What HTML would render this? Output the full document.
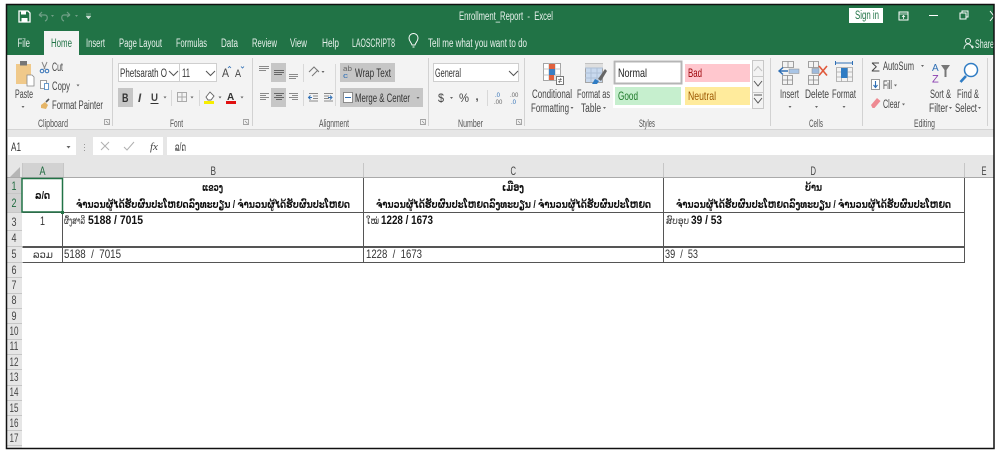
<!DOCTYPE html>
<html lang="lo"><head><meta charset="utf-8"><title>Enrollment_Report - Excel</title>
<style>
html,body{margin:0;padding:0;background:#fff;width:999px;height:457px;overflow:hidden}
svg{display:block;filter:blur(.35px)}
text{font-family:"Liberation Sans","DejaVu Sans",sans-serif;white-space:pre}
.w{fill:#e8f1ec;font-size:11.5px}
.t{fill:#444;font-size:11.5px}
.l{fill:#555;font-size:11px}
.c{fill:#333;font-size:11.5px}
.h{fill:#111;font-size:11px;font-weight:bold}
.n{fill:#111;font-size:12px;font-weight:bold}
.ln{fill:none;stroke:#777;stroke-width:1}
.cell{stroke:#555;stroke-width:1;fill:none}
.rh{fill:#444;font-size:12px}
.car{fill:#666}
</style></head><body>
<svg width="999" height="457" viewBox="0 0 999 457" xmlns="http://www.w3.org/2000/svg">
<rect width="999" height="457" fill="#fff"/>
<!-- title + tabs -->
<rect x="6" y="4" width="988" height="51" fill="#217346"/>
<rect x="44" y="31" width="35" height="24" fill="#f3f3f3"/>
<!-- save -->
<path d="M19 11h9l2 2v9H19z" fill="none" stroke="#fff" stroke-width="1.3"/><rect x="21" y="11" width="5" height="3.5" fill="#fff"/><rect x="21.500" y="18" width="6" height="4" fill="#fff"/>
<path d="M39 15l3-3M39 15l3 2M39 15h6c3 0 3 5 0 6" fill="none" stroke="#6f9f86" stroke-width="1.2"/>
<path d="M70 15l-3-3M70 15l-3 2M70 15h-6c-3 0-3 5 0 6" fill="none" stroke="#6f9f86" stroke-width="1.2"/>
<path d="M51 15h3l-1.500 2zM75 15h3l-1.500 2z" fill="#6f9f86"/>
<path d="M86 14h5M86 16h5l-2.500 3z" fill="#cfe0d6" stroke="#cfe0d6" stroke-width=".5"/>
<text class="w" x="459" y="20" textLength="94" lengthAdjust="spacingAndGlyphs">Enrollment_Report  -  Excel</text>
<rect x="849" y="8" width="34" height="15" fill="#fff"/>
<text x="855" y="19" textLength="24" lengthAdjust="spacingAndGlyphs" style="font-size:11.5px;fill:#217346">Sign in</text>
<rect x="899" y="12" width="9" height="8" fill="none" stroke="#fff"/><path d="M899 14h9M903.500 19v-3M902 17l1.500-1.500L905 17" stroke="#fff" fill="none" stroke-width=".8"/>
<path d="M929 15.500h9" stroke="#fff"/>
<rect x="960" y="13" width="6" height="6" fill="none" stroke="#fff"/><path d="M962 13v-2h6v6h-2" fill="none" stroke="#fff"/>
<path d="M990 11l4 5M990 21l4-5" stroke="#fff"/>
<text class="w" x="17.500" y="47" textLength="12.500" lengthAdjust="spacingAndGlyphs">File</text>
<text x="51" y="47" textLength="21" lengthAdjust="spacingAndGlyphs" style="font-size:11.5px;fill:#217346">Home</text>
<text class="w" x="86" y="47" textLength="19" lengthAdjust="spacingAndGlyphs">Insert</text>
<text class="w" x="119" y="47" textLength="43" lengthAdjust="spacingAndGlyphs">Page Layout</text>
<text class="w" x="176" y="47" textLength="31" lengthAdjust="spacingAndGlyphs">Formulas</text>
<text class="w" x="221" y="47" textLength="17" lengthAdjust="spacingAndGlyphs">Data</text>
<text class="w" x="252" y="47" textLength="25" lengthAdjust="spacingAndGlyphs">Review</text>
<text class="w" x="290" y="47" textLength="17" lengthAdjust="spacingAndGlyphs">View</text>
<text class="w" x="322" y="47" textLength="17" lengthAdjust="spacingAndGlyphs">Help</text>
<text class="w" x="352" y="47" textLength="43" lengthAdjust="spacingAndGlyphs">LAOSCRIPT8</text>
<path d="M412 45c-1-3-3-4-3-7a4.500 4.500 0 0 1 9 0c0 3-2 4-3 7zM412.500 47h2" fill="none" stroke="#fff"/>
<text class="w" x="428" y="47" textLength="99" lengthAdjust="spacingAndGlyphs">Tell me what you want to do</text>
<circle cx="968" cy="41" r="2.500" fill="none" stroke="#e8f1ec"/><path d="M964 49c0-3 2-5 4-5s3 1 4 3M971 47h3M972.500 45.500v3" fill="none" stroke="#e8f1ec" stroke-width=".9"/>
<text class="w" x="975" y="48" textLength="19" lengthAdjust="spacingAndGlyphs">Share</text>

<!-- ribbon -->
<rect x="7" y="55" width="987" height="74" fill="#f3f3f3"/>
<rect x="7" y="129" width="987" height="8" fill="#e6e6e6"/>
<path d="M7 129.500h987" stroke="#d4d4d4"/>
<!-- group dividers -->
<path d="M112.500 58v68M252.500 58v68M428.500 58v68M524.500 58v68M770.500 58v68M862.500 58v68M987.500 58v68" stroke="#d2d2d2"/>
<!-- clipboard -->
<rect x="16" y="64" width="15" height="20" fill="#f0c98a"/><rect x="20" y="61" width="7" height="4.500" fill="#777"/><path d="M27 75h5l2 2v9h-7z" fill="#fff" stroke="#888" stroke-width=".8"/>
<text class="t" x="15" y="98" textLength="18" lengthAdjust="spacingAndGlyphs">Paste</text>
<path class="car" d="M21.500 106h3l-1.500 2z"/>
<path d="M42 62l3 7M47 62l-3 7" stroke="#888" fill="none"/><circle cx="42" cy="71" r="1.800" fill="none" stroke="#2f6fb5"/><circle cx="47" cy="71" r="1.800" fill="none" stroke="#2f6fb5"/>
<text class="t" x="52" y="71" textLength="11" lengthAdjust="spacingAndGlyphs">Cut</text>
<rect x="40.500" y="80.500" width="6" height="8" fill="#fff" stroke="#888" stroke-width=".8"/><path d="M44.500 83.500h4v6h-4z" fill="#fff" stroke="#3f7fbf" stroke-width=".8"/>
<text class="t" x="52" y="90" textLength="18" lengthAdjust="spacingAndGlyphs">Copy</text>
<path class="car" d="M76.500 84.500h3l-1.500 2z"/>
<path d="M41 105l4-3 3 3-2 4-5-1z" fill="#e5b567"/><path d="M46 102l3-3" stroke="#555" stroke-width="1.600"/>
<text class="t" x="52" y="109" textLength="51" lengthAdjust="spacingAndGlyphs">Format Painter</text>
<text class="l" x="38" y="127" textLength="30" lengthAdjust="spacingAndGlyphs">Clipboard</text>
<path d="M104.500 119.500h5v5h-5zM106 121l2.500 2.500" fill="none" stroke="#888" stroke-width=".7"/>
<!-- font -->
<rect x="118.500" y="63.500" width="98" height="18" fill="#fff" stroke="#cfcfcf"/><path d="M179.500 63v19" stroke="#cfcfcf"/>
<text class="c" x="120" y="77" textLength="47" lengthAdjust="spacingAndGlyphs">Phetsarath O</text>
<path d="M169 71l4.500 4.500L178 71M206 71l4.500 4.500L215 71" fill="none" stroke="#555"/>
<text class="c" x="182" y="77" textLength="8" lengthAdjust="spacingAndGlyphs">11</text>
<text x="222" y="77" textLength="7" lengthAdjust="spacingAndGlyphs" style="font-size:12px;fill:#444">A</text><path d="M228 68l1.500-1.500L231 68" stroke="#2f6fb5" fill="none" stroke-width=".8"/>
<text x="235" y="77" textLength="6" lengthAdjust="spacingAndGlyphs" style="font-size:11px;fill:#444">A</text><path d="M241 66.500l1.500 1.500 1.500-1.500" stroke="#2f6fb5" fill="none" stroke-width=".8"/>
<rect x="118" y="88" width="15" height="19" fill="#c6c6c6"/>
<text x="122" y="102" textLength="6.500" lengthAdjust="spacingAndGlyphs" style="font-size:11.5px;font-weight:bold;fill:#333">B</text>
<text x="138" y="102" style="font-size:11.5px;font-weight:bold;font-style:italic;fill:#444">I</text>
<text x="151" y="101" textLength="7" lengthAdjust="spacingAndGlyphs" style="font-size:11px;font-weight:bold;fill:#444">U</text><path d="M150.500 103.500h8" stroke="#333"/>
<path class="car" d="M163.500 96.500h3l-1.500 2z"/>
<path d="M171.500 90v16M199.500 90v16" stroke="#d8d8d8"/>
<path d="M177.500 92.500h9v9h-9zM182 92.500v9M177.500 97h9" fill="none" stroke="#aaa"/>
<path class="car" d="M190.500 96.500h3l-1.500 2z"/>
<path d="M206 97l4-5 4 4-3 4h-3z" fill="#fff" stroke="#666" stroke-width=".9"/><rect x="204" y="101" width="10" height="3" fill="#f7ee00"/>
<path class="car" d="M218.500 96.500h3l-1.500 2z"/>
<text x="227" y="100" style="font-size:10px;font-weight:bold;fill:#333">A</text><rect x="226" y="101" width="10" height="3" fill="#e01010"/>
<path class="car" d="M240.500 96.500h3l-1.500 2z"/>
<text class="l" x="170" y="127" textLength="13" lengthAdjust="spacingAndGlyphs">Font</text>
<path d="M243.500 119.500h5v5h-5zM245 121l2.500 2.500" fill="none" stroke="#888" stroke-width=".7"/>
<!-- alignment -->
<rect x="271" y="63" width="15" height="19" fill="#c6c6c6"/><rect x="271" y="88" width="15" height="19" fill="#c6c6c6"/>
<g stroke="#8a8a8a" fill="none">
<path d="M259 66.500h10M259 68.500h10M259 70.500h7"/>
<path d="M274 70.500h10M274 72.500h10M274 74.500h8" stroke="#666"/>
<path d="M289 74.500h9M289 76.500h9M289 78.500h7"/>
<path d="M260 93.500h9M260 95.500h6M260 97.500h9M260 99.500h6"/>
<path d="M274 93.500h10M276 95.500h6M274 97.500h10M276 99.500h6" stroke="#666"/>
<path d="M289 93.500h9M292 95.500h6M289 97.500h9M292 99.500h6"/>
</g>
<path d="M303.500 64v18M303.500 90v16M335.500 64v42" stroke="#d8d8d8"/>
<path d="M309 72l5-5 5 5M312 76l6-6" fill="none" stroke="#777"/><path class="car" d="M321.500 71h3l-1.500 2z"/>
<path d="M309 93.500h9M313 96h5M313 98.500h5M309 101h9" stroke="#888"/><path d="M312 97.500l-3 0M310.500 95.500l-2 2 2 2" stroke="#2f6fb5" fill="none"/>
<path d="M324 93.500h9M324 96h5M324 98.500h5M324 101h9" stroke="#888"/><path d="M328 97.500h3M330 95.500l2 2-2 2" stroke="#2f6fb5" fill="none"/>
<rect x="340" y="63" width="55" height="19" fill="#c6c6c6"/><rect x="340" y="88" width="83" height="19" fill="#c6c6c6"/>
<text x="343" y="71" textLength="9" lengthAdjust="spacingAndGlyphs" style="font-size:7px;fill:#666">ab</text><text x="343" y="78" textLength="5" lengthAdjust="spacingAndGlyphs" style="font-size:7px;fill:#2f6fb5">c</text>
<text class="c" x="355" y="77" textLength="36" lengthAdjust="spacingAndGlyphs">Wrap Text</text>
<rect x="343.500" y="92.500" width="9" height="10" fill="#fff" stroke="#777" stroke-width=".8"/><path d="M345 97.500h6" stroke="#2f6fb5"/>
<text class="c" x="355" y="102" textLength="55" lengthAdjust="spacingAndGlyphs">Merge &amp; Center</text>
<path class="car" d="M416.500 97h3l-1.500 2z"/>
<text class="l" x="319" y="127" textLength="30" lengthAdjust="spacingAndGlyphs">Alignment</text>
<path d="M420.500 119.500h5v5h-5zM422 121l2.500 2.500" fill="none" stroke="#888" stroke-width=".7"/>
<!-- number -->
<rect x="433.500" y="63.500" width="85" height="18" fill="#fff" stroke="#cfcfcf"/>
<text class="c" x="435" y="77" textLength="26" lengthAdjust="spacingAndGlyphs">General</text>
<path d="M509 71l4.500 4.500L518 71" fill="none" stroke="#555"/>
<text x="438" y="102" textLength="6" lengthAdjust="spacingAndGlyphs" style="font-size:12px;fill:#444">$</text><path class="car" d="M450 97h3l-1.500 2z"/>
<text x="459" y="102" textLength="10" lengthAdjust="spacingAndGlyphs" style="font-size:12px;fill:#444">%</text>
<text x="475.500" y="100" style="font-size:11px;font-weight:bold;fill:#444">,</text>
<path d="M487.500 90v16" stroke="#d8d8d8"/>
<text x="495" y="97" style="font-size:6px;fill:#2f6fb5">.0</text><text x="494" y="104" style="font-size:6px;fill:#666">.00</text>
<text x="510" y="97" style="font-size:6px;fill:#666">.00</text><text x="511" y="104" style="font-size:6px;fill:#2f6fb5">.0</text>
<text class="l" x="458" y="127" textLength="25" lengthAdjust="spacingAndGlyphs">Number</text>
<path d="M516.500 119.500h5v5h-5zM518 121l2.500 2.500" fill="none" stroke="#888" stroke-width=".7"/>
<!-- styles -->
<g>
<rect x="543.500" y="63.500" width="17" height="17" fill="#fff" stroke="#a5a5a5"/>
<path d="M543.500 69h17M543.500 75h17M549 63.500v17M555 63.500v17" stroke="#c5c5c5" fill="none"/>
<rect x="549" y="64" width="6" height="5" fill="#e0623f"/><rect x="549" y="69" width="6" height="6" fill="#3a7fc4"/><rect x="549" y="75" width="5" height="5" fill="#e0623f"/>
<rect x="556.500" y="76.500" width="7" height="8" fill="#fff" stroke="#777"/><path d="M558 79.500h4M558 81.500h4M561 78l-2 5" stroke="#444" stroke-width=".6"/>
<rect x="585.500" y="63.500" width="17" height="19" fill="#c8d9ee" stroke="#a5a5a5"/>
<path d="M585 68h18M585 73h18M585 78h18M591 63.500v19M597 63.500v19" stroke="#aebfd6" fill="none"/><rect x="585" y="63.500" width="18" height="4" fill="#dfdfdf"/>
<path d="M598 79l7-10 2 2-6 10z" fill="#666"/><path d="M592 84l3-5 4 2-2 3z" fill="#2f7cc4"/>
</g>
<text class="t" x="532" y="98" textLength="40" lengthAdjust="spacingAndGlyphs">Conditional</text>
<text class="t" x="531" y="112" textLength="38" lengthAdjust="spacingAndGlyphs">Formatting</text><path class="car" d="M570.500 107h3l-1.500 2z"/>
<text class="t" x="577" y="98" textLength="33" lengthAdjust="spacingAndGlyphs">Format as</text>
<text class="t" x="581" y="112" textLength="20" lengthAdjust="spacingAndGlyphs">Table</text><path class="car" d="M603 107h3l-1.500 2z"/>
<text class="l" x="639" y="127" textLength="16" lengthAdjust="spacingAndGlyphs">Styles</text>
<rect x="613" y="60" width="139" height="48" fill="#fff"/>
<rect x="614.500" y="61.500" width="67" height="22" fill="#fff" stroke="#b5b5b5" stroke-width="2"/>
<text x="618" y="77" textLength="29" lengthAdjust="spacingAndGlyphs" style="font-size:12px;fill:#222">Normal</text>
<rect x="685" y="64" width="65" height="18" fill="#ffc7ce"/>
<text x="688" y="77" textLength="14" lengthAdjust="spacingAndGlyphs" style="font-size:12px;fill:#9c0006">Bad</text>
<rect x="615" y="87" width="66" height="18" fill="#c6efce"/>
<text x="618" y="100" textLength="20" lengthAdjust="spacingAndGlyphs" style="font-size:12px;fill:#1f7a2a">Good</text>
<rect x="685" y="87" width="65" height="18" fill="#ffeb9c"/>
<text x="688" y="100" textLength="28" lengthAdjust="spacingAndGlyphs" style="font-size:12px;fill:#9c5700">Neutral</text>
<rect x="752.500" y="60.500" width="11" height="48" fill="#f3f3f3" stroke="#c8c8c8"/>
<path d="M752 76.500h12M752 92.500h12" stroke="#c8c8c8"/>
<path d="M754 71l4-4.500 4 4.500" fill="none" stroke="#c0c0c0"/>
<path d="M754 81l4 5 4-5" fill="none" stroke="#555"/>
<path d="M754 95h8M754 98l4 5 4-5" fill="none" stroke="#555"/>
<!-- cells -->
<path d="M782.500 61.500h11v6h-11zM788 61.500v6M782.500 75.500h10v9h-10zM787.500 75.500v9M782.500 80h10" fill="none" stroke="#8a8a8a" stroke-width=".8"/>
<rect x="789" y="69" width="10" height="4.500" fill="#a9c5e6" stroke="#8a8a8a" stroke-width=".5"/>
<path d="M779 71h9M783 67.500l-4 3.500 4 3.500" fill="none" stroke="#2f6fb5" stroke-width="1.400"/>
<text class="t" x="780" y="98" textLength="19" lengthAdjust="spacingAndGlyphs">Insert</text><path class="car" d="M788.500 106h3l-1.500 2z"/>
<path d="M808.500 61.500h10v6h-10zM813.500 61.500v6M808.500 75.500h10v9h-10zM813.500 75.500v9M808.500 80h10" fill="none" stroke="#8a8a8a" stroke-width=".8"/>
<rect x="812" y="68.500" width="7" height="5" fill="#9db9dc" stroke="#8a8a8a" stroke-width=".5"/>
<path d="M819 66l8 9.500M827 66l-8 9.500" stroke="#e0583a" stroke-width="1.600"/>
<text class="t" x="805" y="98" textLength="24" lengthAdjust="spacingAndGlyphs">Delete</text><path class="car" d="M815 106h3l-1.500 2z"/>
<path d="M835.500 63h17M835.500 61v4M852.500 61v4" stroke="#2f6fb5" fill="none"/>
<path d="M836.500 67.500h16v14h-16zM841.500 67.500v14M847.500 67.500v14M836.500 72h16M836.500 77h16" fill="none" stroke="#a5a5a5" stroke-width=".8"/>
<rect x="841" y="68" width="6.500" height="10" fill="#2f7cc4"/>
<text class="t" x="832" y="98" textLength="24" lengthAdjust="spacingAndGlyphs">Format</text><path class="car" d="M842.500 106h3l-1.500 2z"/>
<text class="l" x="809" y="127" textLength="14" lengthAdjust="spacingAndGlyphs">Cells</text>
<!-- editing -->
<text x="871" y="71.500" textLength="9" lengthAdjust="spacingAndGlyphs" style="font-size:13px;fill:#444">Σ</text>
<text class="t" x="883" y="70" textLength="31" lengthAdjust="spacingAndGlyphs">AutoSum</text><path class="car" d="M921 65h3l-1.500 2z"/>
<rect x="871.500" y="79.500" width="8" height="10" fill="#fff" stroke="#999"/><path d="M875.500 81v6M873.500 85l2 2.500 2-2.500" stroke="#2f6fb5" fill="none" stroke-width="1.100"/>
<text class="t" x="883" y="89" textLength="9" lengthAdjust="spacingAndGlyphs">Fill</text><path class="car" d="M894 84.500h3l-1.500 2z"/>
<path d="M871 105l6-7 3.500 3-6 7h-2z" fill="#ee8a92"/>
<text class="t" x="883" y="108" textLength="17" lengthAdjust="spacingAndGlyphs">Clear</text><path class="car" d="M902 103.500h3l-1.500 2z"/>
<text x="932" y="71" style="font-size:10px;fill:#2f6fb5">A</text><text x="932" y="82.500" style="font-size:11px;fill:#8a3fb0">Z</text>
<path d="M941 65h9l-3.500 5v7h-2v-7z" fill="#777"/>
<text class="t" x="930" y="98" textLength="21" lengthAdjust="spacingAndGlyphs">Sort &amp;</text>
<text class="t" x="929" y="112" textLength="19" lengthAdjust="spacingAndGlyphs">Filter</text><path class="car" d="M949 107h3l-1.500 2z"/>
<circle cx="971" cy="70" r="6.500" fill="#fff" stroke="#2f7cc4" stroke-width="1.500"/><path d="M966 76l-5.500 6" stroke="#2f7cc4" stroke-width="2.600"/>
<text class="t" x="957" y="98" textLength="22" lengthAdjust="spacingAndGlyphs">Find &amp;</text>
<text class="t" x="955" y="112" textLength="22" lengthAdjust="spacingAndGlyphs">Select</text><path class="car" d="M978 107h3l-1.500 2z"/>
<text class="l" x="914" y="127" textLength="21" lengthAdjust="spacingAndGlyphs">Editing</text>

<!-- formula bar -->
<rect x="7" y="137" width="987" height="27" fill="#e6e6e6"/>
<rect x="8" y="137" width="68" height="18" fill="#fff"/>
<rect x="93" y="137" width="70" height="18" fill="#fff"/>
<rect x="167" y="137" width="827" height="18" fill="#fff"/>
<text class="c" x="11" y="151" textLength="10" lengthAdjust="spacingAndGlyphs">A1</text>
<path class="car" d="M66.500 146h4l-2 2.500z"/>
<path d="M84.500 144v1M84.500 147v1M84.500 150v1" stroke="#999"/>
<path d="M101 142l8 8M109 142l-8 8" stroke="#b0b0b0"/>
<path d="M124 147l3 3 7-8" fill="none" stroke="#b0b0b0"/>
<text x="150" y="150" style="font-size:11px;font-style:italic;font-family:'Liberation Serif',serif;fill:#444">fx</text>
<text class="c" x="175" y="151" textLength="11" lengthAdjust="spacingAndGlyphs">ລ/ດ</text>

<!-- sheet headers -->
<rect x="7" y="163" width="987" height="15" fill="#e6e6e6"/>
<rect x="22" y="163" width="41" height="15" fill="#d2d2d2"/>
<path d="M10 177l10-10v10z" fill="#b5b5b5"/>
<path d="M22.500 163v15M63.500 163v15M363.500 163v15M663.500 163v15M964.500 163v15" stroke="#c6c6c6"/>
<path d="M7 177.500h987" stroke="#aaa"/>
<text class="rh" x="39.500" y="175" textLength="6" lengthAdjust="spacingAndGlyphs" style="fill:#1f6b3f">A</text>
<text class="rh" x="210.500" y="175" textLength="5.500" lengthAdjust="spacingAndGlyphs">B</text>
<text class="rh" x="510.500" y="175" textLength="5.500" lengthAdjust="spacingAndGlyphs">C</text>
<text class="rh" x="810.500" y="175" textLength="5.500" lengthAdjust="spacingAndGlyphs">D</text>
<text class="rh" x="981.500" y="175" textLength="5" lengthAdjust="spacingAndGlyphs">E</text>
<!-- row headers -->
<rect x="7" y="178" width="15" height="270" fill="#e6e6e6"/>
<rect x="7" y="178" width="15" height="34" fill="#d2d2d2"/>
<path d="M7 193.500h15M7 212.500h15M7 230.500h15M7 246.500h15M7 262.500h15M7 277.500h15M7 293.500h15M7 308.500h15M7 323.500h15M7 339.500h15M7 354.500h15M7 369.500h15M7 385.500h15M7 400.500h15M7 415.500h15M7 430.500h15M7 445.500h15" stroke="#c6c6c6"/>
<text class="rh" x="11.500" y="190" textLength="5" lengthAdjust="spacingAndGlyphs" style="fill:#1f6b3f">1</text>
<text class="rh" x="11.500" y="207" textLength="5" lengthAdjust="spacingAndGlyphs" style="fill:#1f6b3f">2</text>
<text class="rh" x="11.500" y="226" textLength="5" lengthAdjust="spacingAndGlyphs">3</text>
<text class="rh" x="11.500" y="242" textLength="5" lengthAdjust="spacingAndGlyphs">4</text>
<text class="rh" x="11.500" y="258" textLength="5" lengthAdjust="spacingAndGlyphs">5</text>
<text class="rh" x="11.500" y="274" textLength="5" lengthAdjust="spacingAndGlyphs">6</text>
<text class="rh" x="11.500" y="289" textLength="5" lengthAdjust="spacingAndGlyphs">7</text>
<text class="rh" x="11.500" y="304" textLength="5" lengthAdjust="spacingAndGlyphs">8</text>
<text class="rh" x="11.500" y="320" textLength="5" lengthAdjust="spacingAndGlyphs">9</text>
<text class="rh" x="9.500" y="335" textLength="9" lengthAdjust="spacingAndGlyphs">10</text>
<text class="rh" x="9.500" y="350" textLength="9" lengthAdjust="spacingAndGlyphs">11</text>
<text class="rh" x="9.500" y="366" textLength="9" lengthAdjust="spacingAndGlyphs">12</text>
<text class="rh" x="9.500" y="381" textLength="9" lengthAdjust="spacingAndGlyphs">13</text>
<text class="rh" x="9.500" y="396" textLength="9" lengthAdjust="spacingAndGlyphs">14</text>
<text class="rh" x="9.500" y="412" textLength="9" lengthAdjust="spacingAndGlyphs">15</text>
<text class="rh" x="9.500" y="427" textLength="9" lengthAdjust="spacingAndGlyphs">16</text>
<text class="rh" x="9.500" y="442" textLength="9" lengthAdjust="spacingAndGlyphs">17</text>

<!-- cells -->
<path class="cell" d="M22.500 212.500H964.500M22.500 246.500H964.500M22.500 247.500H964.500M22.500 262.500H964.500M62.500 178V263M363.500 178V263M663.500 178V263M964.500 178V263"/>
<rect x="22" y="178.500" width="40.500" height="33.500" fill="none" stroke="#217346" stroke-width="1.500"/>
<rect x="61" y="211" width="3" height="3" fill="#217346"/>
<text class="h" x="35" y="199" textLength="15" lengthAdjust="spacingAndGlyphs">ລ/ດ</text>
<text class="h" x="202" y="191" textLength="21" lengthAdjust="spacingAndGlyphs">ແຂວງ</text>
<text class="h" x="76" y="208" textLength="274" lengthAdjust="spacingAndGlyphs">ຈຳນວນຜູ້ໄດ້ຮັບຜົນປະໂຫຍດລົງທະບຽນ / ຈຳນວນຜູ້ໄດ້ຮັບຜົນປະໂຫຍດ</text>
<text class="h" x="502" y="191" textLength="22" lengthAdjust="spacingAndGlyphs">ເມືອງ</text>
<text class="h" x="376" y="208" textLength="275" lengthAdjust="spacingAndGlyphs">ຈຳນວນຜູ້ໄດ້ຮັບຜົນປະໂຫຍດລົງທະບຽນ / ຈຳນວນຜູ້ໄດ້ຮັບຜົນປະໂຫຍດ</text>
<text class="h" x="805" y="191" textLength="17" lengthAdjust="spacingAndGlyphs">ບ້ານ</text>
<text class="h" x="676" y="208" textLength="275" lengthAdjust="spacingAndGlyphs">ຈຳນວນຜູ້ໄດ້ຮັບຜົນປະໂຫຍດລົງທະບຽນ / ຈຳນວນຜູ້ໄດ້ຮັບຜົນປະໂຫຍດ</text>
<text class="c" x="40" y="225" textLength="5" lengthAdjust="spacingAndGlyphs" style="font-size:12px">1</text>
<text class="c" x="64" y="224" textLength="21" lengthAdjust="spacingAndGlyphs" style="font-size:10px">ຜົ້ງສາລີ</text>
<text class="n" x="88" y="224" textLength="55" lengthAdjust="spacingAndGlyphs">5188 / 7015</text>
<text class="c" x="366" y="224" textLength="13" lengthAdjust="spacingAndGlyphs" style="font-size:10px">ໃໝ່</text>
<text class="n" x="381" y="224" textLength="52" lengthAdjust="spacingAndGlyphs">1228 / 1673</text>
<text class="c" x="666" y="224" textLength="23" lengthAdjust="spacingAndGlyphs" style="font-size:10px">ສົບອຸບ</text>
<text class="n" x="691" y="224" textLength="31" lengthAdjust="spacingAndGlyphs">39 / 53</text>
<text class="c" x="33" y="258" textLength="20" lengthAdjust="spacingAndGlyphs" style="font-size:10px">ລວມ</text>
<text class="c" x="64" y="258" textLength="57" lengthAdjust="spacingAndGlyphs" style="font-size:12px">5188  /  7015</text>
<text class="c" x="366" y="258" textLength="56" lengthAdjust="spacingAndGlyphs" style="font-size:12px">1228  /  1673</text>
<text class="c" x="665" y="258" textLength="33" lengthAdjust="spacingAndGlyphs" style="font-size:12px">39  /  53</text>

<!-- frame -->
<rect x="6.500" y="4.500" width="987.500" height="444" fill="none" stroke="#111" stroke-width="1.500"/>
</svg>
</body></html>
